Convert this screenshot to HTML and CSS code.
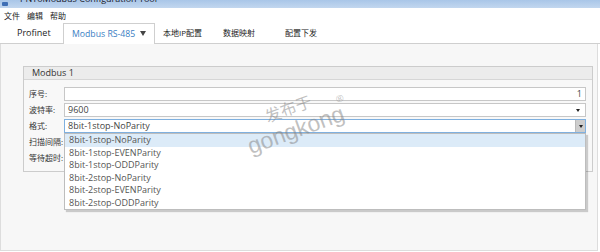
FILE: index.html
```html
<!DOCTYPE html>
<html>
<head>
<meta charset="utf-8">
<link rel="stylesheet" href="styles.css">
</head>
<body>
<div class="titlebar">
  <span class="app-icon"></span>
  <span class="title-text">PNToModbus Configuration Tool</span>
</div>
<div class="menubar">
  <span class="menu-item cjk">文件</span>
  <span class="menu-item cjk">编辑</span>
  <span class="menu-item cjk">帮助</span>
</div>
<div class="tabs">
  <span class="tab tab-1">Profinet</span>
  <span class="tab tab-active"><span class="tab-label">Modbus RS-485</span><span class="tab-caret"></span></span>
  <span class="tab tab-3 cjk">本地IP配置</span>
  <span class="tab tab-4 cjk">数据映射</span>
  <span class="tab tab-5 cjk">配置下发</span>
</div>
<div class="panel">
  <div class="group">
    <div class="group-header">Modbus 1</div>
    <div class="form">
      <label class="lbl cjk">序号:</label>
      <div class="field num">1</div>
      <label class="lbl cjk">波特率:</label>
      <div class="field select">9600<span class="arrow"></span></div>
      <label class="lbl cjk">格式:</label>
      <div class="field select focused">8bit-1stop-NoParity<span class="drop-btn"><span class="arrow"></span></span>
        <ul class="droplist">
          <li class="opt selected">8bit-1stop-NoParity</li>
          <li class="opt">8bit-1stop-EVENParity</li>
          <li class="opt">8bit-1stop-ODDParity</li>
          <li class="opt">8bit-2stop-NoParity</li>
          <li class="opt">8bit-2stop-EVENParity</li>
          <li class="opt">8bit-2stop-ODDParity</li>
        </ul>
      </div>
      <label class="lbl cjk">扫描间隔:</label>
      <div class="field"></div>
      <label class="lbl cjk">等待超时:</label>
      <div class="field"></div>
    </div>
  </div>
</div>
<div class="watermark">
  <span class="wm wm-cn">发布于</span>
  <span class="wm wm-en">gongkong</span>
  <span class="wm wm-reg">®</span>
</div>
</body>
</html>
```

FILE: styles.css
```css
* { box-sizing: border-box; }
html, body { margin: 0; padding: 0; }
body {
  width: 600px;
  height: 252px;
  overflow: hidden;
  background: #ffffff;
  font-family: "Open Sans", "Noto Sans CJK SC", sans-serif;
  font-size: 9px;
  color: #333;
  position: relative;
}
.cjk { font-size: 8px; }

.titlebar {
  height: 8px;
  overflow: hidden;
  background: linear-gradient(#a9c6e8, #c2d7ef);
  display: flex;
  align-items: flex-end;
  padding-left: 2px;
}
.app-icon {
  width: 6px;
  height: 4px;
  background: #3f6fb5;
  margin-bottom: 2px;
  border-radius: 1px;
}
.title-text {
  display: block;
  margin-left: 12px;
  line-height: 12px;
  margin-bottom: 3px;
  font-size: 9px;
  color: #1a1a2a;
  white-space: nowrap;
}

.menubar {
  height: 15px;
  display: flex;
  gap: 7px;
  padding-left: 4px;
  line-height: 15px;
  color: #222;
}

.tabs {
  height: 21px;
  display: flex;
  border-bottom: 1px solid #cfcfcf;
  line-height: 20px;
  color: #222;
}
.tab { display: block; white-space: nowrap; flex: none; }
.tab-1 { padding: 0 0 0 17px; width: 63px; }
.tab-active {
  width: 92px;
  height: 21px;
  border: 1px solid #cfcfcf;
  border-bottom: none;
  background: #ffffff;
  padding: 0 8px 0 8px;
  display: flex;
  align-items: center;
  justify-content: space-between;
  color: #3a7ec3;
}
.tab-label { font-size: 8.7px; }
.tab-caret {
  flex: none;
  width: 0;
  height: 0;
  border-left: 3.5px solid transparent;
  border-right: 3.5px solid transparent;
  border-top: 5px solid #444;
  margin-top: -1px;
}
.tab-3 { padding: 0 0 0 8px; width: 68px; }
.tab-4 { width: 62px; }

.panel {
  height: 207px;
  border: 1px solid #dddddd;
  border-top: none;
  margin-right: 2px;
  background: #f7f7f7;
  padding: 22px 4px 0 22px;
}

.group {
  border: 1px solid #cccccc;
  background: #f8f8f8;
  width: 570px;
}
.group-header {
  height: 13px;
  line-height: 12px;
  background: #ececec;
  border-bottom: 1px solid #d6d6d6;
  padding-left: 8px;
  color: #333;
}
.form {
  display: grid;
  grid-template-columns: 35px 522px;
  row-gap: 2px;
  padding: 7px 0 6px 5px;
  align-items: center;
}
.lbl {
  line-height: 14px;
  white-space: nowrap;
  color: #333;
}
.field {
  position: relative;
  height: 14px;
  line-height: 12px;
  border: 1px solid #c7c7c7;
  background: #ffffff;
  padding-left: 3px;
  color: #444;
}
.field.num {
  text-align: right;
  padding-right: 3px;
}
.field.select .arrow {
  position: absolute;
  right: 5px;
  top: 5px;
  width: 0;
  height: 0;
  border-left: 2.5px solid transparent;
  border-right: 2.5px solid transparent;
  border-top: 3px solid #222;
}
.field.focused {
  border-color: #7fb0df;
}
.drop-btn {
  position: absolute;
  right: 0;
  top: 0;
  width: 10px;
  height: 12px;
  background: #cdcdcd;
  border-left: 1px solid #b9b9b9;
}
.drop-btn .arrow { right: 2px !important; top: 5px !important; }

.droplist {
  position: absolute;
  left: -1px;
  right: -1px;
  top: 13px;
  margin: 0;
  padding: 0;
  list-style: none;
  background: #ffffff;
  border: 1px solid #bdbdbd;
  box-shadow: 2px 2px 1px rgba(0, 0, 0, 0.18);
  z-index: 2;
}
.opt {
  height: 12.5px;
  line-height: 12.5px;
  padding-left: 4px;
  color: #555;
}
.opt.selected { background: #dcebf8; }

.watermark {
  position: absolute;
  left: 0;
  top: 0;
  width: 600px;
  height: 252px;
  pointer-events: none;
  z-index: 5;
}
.wm {
  position: absolute;
  white-space: nowrap;
  color: rgba(130, 130, 130, 0.5);
  transform: translate(-50%, -50%) rotate(-20deg);
}
.wm-cn {
  left: 288px;
  top: 108px;
  font-family: "Noto Sans CJK SC", sans-serif;
  font-size: 16px;
  line-height: 16px;
}
.wm-en {
  left: 296px;
  top: 130px;
  font-family: "Liberation Sans", sans-serif;
  font-size: 23px;
  line-height: 23px;
}
.wm-reg {
  left: 340px;
  top: 99px;
  font-family: "Liberation Sans", sans-serif;
  font-size: 10px;
  line-height: 10px;
}
```
